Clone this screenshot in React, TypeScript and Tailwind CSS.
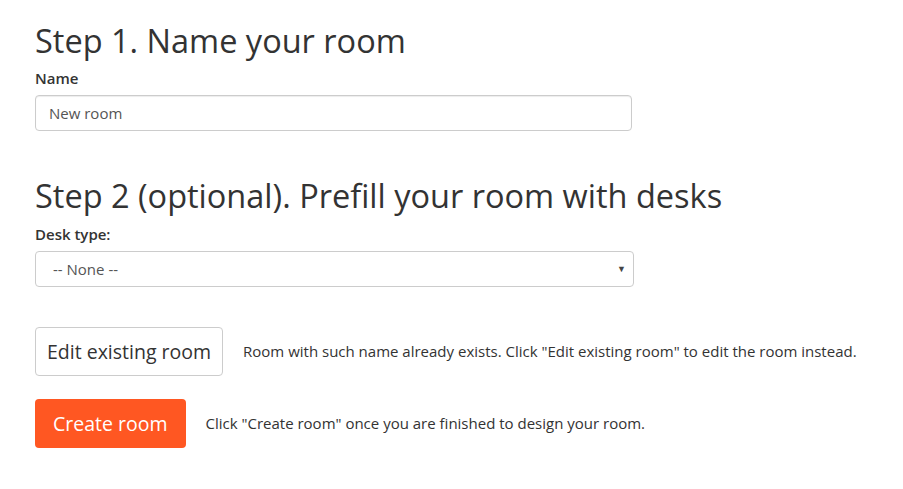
import React, { useState } from 'react';

const font = { fontFamily: '"Open Sans", "Liberation Sans", sans-serif' };

const App: React.FC = () => {
  const [name, setName] = useState('New room');
  const [deskType, setDeskType] = useState('');

  return (
    <div className="min-h-screen bg-white text-[#333] px-[35px] pt-[20px]" style={font}>
      <h2 className="text-[32.5px] leading-[42px] text-[#333]">Step 1. Name your room</h2>
      <div className="mt-[6px]">
        <label className="block text-[15px] font-semibold leading-[21px] mb-[6px]">Name</label>
        <input
          value={name}
          onChange={(e) => setName(e.target.value)}
          className="w-[597px] h-[36px] border border-[#ccc] rounded-[4px] px-[13px] text-[15px] text-[#555] outline-none shadow-[inset_0_1px_1px_rgba(0,0,0,0.075)]"
        />
      </div>

      <h2 className="text-[32.5px] leading-[42px] text-[#333] mt-[44px]">Step 2 (optional). Prefill your room with desks</h2>
      <div className="mt-[7px]">
        <label className="block text-[15px] font-semibold leading-[21px] mb-[6px]">Desk type:</label>
        <div className="relative w-[599px]">
          <select
            value={deskType}
            onChange={(e) => setDeskType(e.target.value)}
            className="w-full h-[36px] appearance-none bg-white border border-[#ccc] rounded-[4px] pl-[17px] pr-8 text-[15px] text-[#555] outline-none"
          >
            <option value="">-- None --</option>
          </select>
          <span className="pointer-events-none absolute right-[8px] top-[11px] text-[9px] text-[#444]">▼</span>
        </div>
      </div>

      <div className="flex items-center gap-[20px] mt-[40px]">
        <button className="h-[49px] px-[11px] border border-[#ccc] rounded-[4px] bg-white text-[19.5px] text-[#333]">
          Edit existing room
        </button>
        <span className="text-[15px] text-[#333]">
          Room with such name already exists. Click "Edit existing room" to edit the room instead.
        </span>
      </div>

      <div className="flex items-center gap-[20px] mt-[23px]">
        <button className="h-[49px] px-[18px] rounded-[4px] bg-[#ff5722] text-[19.5px] text-white">
          Create room
        </button>
        <span className="text-[15px] text-[#333]">
          Click "Create room" once you are finished to design your room.
        </span>
      </div>
    </div>
  );
};

export default App;
